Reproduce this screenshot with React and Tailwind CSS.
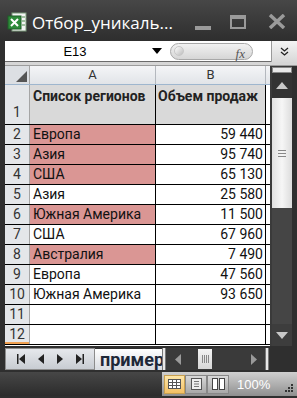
import React from "react";

const rows = [
  { n: 2, a: "Европа", b: "59 440", pink: true },
  { n: 3, a: "Азия", b: "95 740", pink: true },
  { n: 4, a: "США", b: "65 130", pink: true },
  { n: 5, a: "Азия", b: "25 580" },
  { n: 6, a: "Южная Америка", b: "11 500", pink: true },
  { n: 7, a: "США", b: "67 960" },
  { n: 8, a: "Австралия", b: "7 490", pink: true },
  { n: 9, a: "Европа", b: "47 560" },
  { n: 10, a: "Южная Америка", b: "93 650" },
  { n: 11, a: "", b: "" },
  { n: 12, a: "", b: "" },
];

function ExcelIcon() {
  return (
    <svg width="20" height="20" viewBox="0 0 20 20">
      <rect x="5" y="1" width="14" height="18" fill="#f4f4f4" stroke="#7a9a7a" />
      <rect x="1" y="4" width="13" height="13" fill="#2e8b3a" stroke="#1d5e26" />
      <path d="M4 7 L11 14 M11 7 L4 14" stroke="#fff" strokeWidth="2" />
      <path d="M15 5h3M15 9h3M15 13h3" stroke="#4a8a4a" strokeWidth="1" />
    </svg>
  );
}

export default function App() {
  const font = { fontFamily: 'Roboto, "Noto Sans", sans-serif' };
  return (
    <div className="w-[297px] h-[398px] bg-[#2f2f2f] overflow-hidden relative" style={font}>
      {/* Title bar */}
      <div className="h-[41px] flex items-center bg-gradient-to-b from-[#474747] to-[#2e2e2e] relative">
        <div className="ml-[7px] mt-[3px]"><ExcelIcon /></div>
        <div className="ml-[5px] mt-[3px] text-white text-[17px] leading-none" style={{ fontFamily: '"Open Sans", sans-serif' }}>Отбор_уникаль...</div>
        <div className="absolute left-[195px] top-[26px] w-[16px] h-[4px] bg-[#9a9a9a]" />
        <div className="absolute left-[230px] top-[15px] w-[16px] h-[14px] border-[2px] border-t-[4px] border-[#9a9a9a]" />
        <svg className="absolute left-[268px] top-[14px]" width="18" height="15" viewBox="0 0 18 15">
          <path d="M2 1 L16 14 M16 1 L2 14" stroke="#9a9a9a" strokeWidth="3.5" />
        </svg>
      </div>
      {/* Formula bar */}
      <div className="ml-[5px] w-[292px] h-[21px] bg-white flex items-center border-b border-[#6b6b6b]">
        <div className="w-[140px] text-center text-[13px] text-black leading-none" style={{ fontFamily: '"Liberation Sans", sans-serif' }}>E13</div>
        <svg width="10" height="6" viewBox="0 0 10 6" className="ml-[7px]"><path d="M0 0h10L5 6z" fill="#000" /></svg>
        <div className="ml-[8px] w-[83px] h-[17px] rounded-full border border-[#a8a8a8] bg-gradient-to-b from-[#f2f2f2] to-[#d6d6d6] flex items-center relative">
          <div className="ml-[3px] w-[10px] h-[10px] rounded-full bg-gradient-to-br from-[#ffffff] to-[#bcbcbc] border border-[#c8c8c8]" />
          <span className="absolute right-[7px] top-[0px] text-[13px] italic text-[#555]" style={{ fontFamily: '"Liberation Serif", serif' }}>fx</span>
        </div>
        <div className="ml-auto w-[26px] h-[21px] bg-gradient-to-b from-[#f4f4f4] to-[#d8d8d8] border-l border-[#9a9a9a] flex items-center justify-center">
          <svg width="9" height="9" viewBox="0 0 9 9"><path d="M1 1l3.5 3 3.5-3M1 5l3.5 3 3.5-3" stroke="#222" strokeWidth="1.3" fill="none" /></svg>
        </div>
      </div>
      <div className="ml-[5px] w-[292px] h-[4px] bg-[#d6d6d6] border-b border-[#9c9c9c]" />
      {/* Grid + vertical scrollbar */}
      <div className="ml-[5px] flex h-[280px]">
        <div className="w-[265px] bg-white flex flex-col">
          {/* column header */}
          <div className="flex h-[19px] border-b border-[#9eb6ce]">
            <div className="w-[25px] bg-[#dcdfe3] border-r border-[#a5a5a5] relative">
              <svg className="absolute right-[2px] bottom-[2px]" width="11" height="11" viewBox="0 0 11 11"><path d="M11 0V11H0z" fill="#555" /></svg>
            </div>
            <div className="w-[126px] bg-gradient-to-b from-[#f4f5f7] to-[#e1e4e8] border-r border-[#b4b8be] flex items-center justify-center text-[13px] text-[#333]">A</div>
            <div className="w-[110px] bg-gradient-to-b from-[#f4f5f7] to-[#e1e4e8] border-r border-[#b4b8be] flex items-center justify-center text-[13px] text-[#333]">B</div>
            <div className="flex-1 bg-gradient-to-b from-[#f4f5f7] to-[#e1e4e8]" />
          </div>
          {/* row 1 */}
          <div className="flex h-[40px] border-b border-black">
            <div className="w-[25px] bg-[#e4e6e9] border-r border-[#a5a5a5] flex items-end justify-center pb-[1px] text-[14px] text-[#333]">1</div>
            <div className="w-[126px] bg-[#d9d9d9] border-r border-black px-[3px] pt-[2px] text-[14px] font-bold text-[#222] leading-[19px] whitespace-nowrap overflow-hidden">Список регионов</div>
            <div className="w-[110px] bg-[#d9d9d9] border-r border-black px-[2px] pt-[2px] text-[14px] font-bold text-[#222] leading-[19px] whitespace-nowrap overflow-hidden">Объем продаж</div>
            <div className="flex-1 bg-white" />
          </div>
          {rows.map((r) => (
            <div key={r.n} className="flex h-[20px] border-b border-black">
              <div className={`w-[25px] bg-[#e4e6e9] border-r border-[#a5a5a5] flex items-center justify-center text-[14px] text-[#333] ${r.n === 12 ? "shadow-[inset_0_-2px_0_#f0a050]" : ""}`}>{r.n}</div>
              <div className={`w-[126px] border-r border-black px-[3px] flex items-center text-[14px] text-[#111] whitespace-nowrap ${r.pink ? "bg-[#da9694]" : "bg-white"}`}>{r.a}</div>
              <div className="w-[110px] border-r border-black px-[2px] flex items-center justify-end text-[14px] text-[#111]">{r.b}</div>
              <div className="flex-1 bg-white" />
            </div>
          ))}
        </div>
        {/* vertical scrollbar */}
        <div className="w-[22px] bg-[#3a3a3a] flex flex-col items-center pl-[1px]">
          <div className="w-[20px] h-[6px] mt-[1px] bg-[#e9e9e9] border border-[#888]" />
          <div className="w-[20px] h-[25px] bg-[#333] flex items-center justify-center">
            <svg width="12" height="7" viewBox="0 0 12 7"><path d="M6 0L12 7H0z" fill="#c8c8c8" /></svg>
          </div>
          <div className="w-[20px] h-[110px] bg-gradient-to-r from-[#e0e0e0] via-[#f6f6f6] to-[#dcdcdc] flex items-center justify-center">
            <svg width="8" height="7" viewBox="0 0 8 7"><path d="M0 0.5h8M0 3.5h8M0 6.5h8" stroke="#888" /></svg>
          </div>
          <div className="w-[20px] flex-1 bg-[#454545]" />
          <div className="w-[20px] h-[22px] bg-[#3d3d3d] flex items-center justify-center">
            <svg width="12" height="7" viewBox="0 0 12 7"><path d="M0 0H12L6 7z" fill="#c8c8c8" /></svg>
          </div>
        </div>
      </div>
      {/* Tab row */}
      <div className="ml-[5px] flex h-[22px] mt-[2px]">
        <div className="w-[90px] bg-gradient-to-b from-[#e6e8ec] to-[#c8ccd2] border border-[#8c8c8c] flex items-center justify-around px-[4px]">
          <svg width="8" height="10" viewBox="0 0 8 10"><path d="M0 0h1.5v10H0zM8 0v10L2 5z" fill="#222" /></svg>
          <svg width="6" height="10" viewBox="0 0 6 10"><path d="M6 0v10L0 5z" fill="#222" /></svg>
          <svg width="6" height="10" viewBox="0 0 6 10"><path d="M0 0v10L6 5z" fill="#222" /></svg>
          <svg width="8" height="10" viewBox="0 0 8 10"><path d="M0 0v10L6 5zM6.5 0H8v10H6.5z" fill="#222" /></svg>
        </div>
        <div className="w-[67px] bg-gradient-to-b from-[#ffffff] to-[#d8dbe0] overflow-hidden whitespace-nowrap pl-[5px] text-[18px] font-bold text-[#1e2838] leading-[21px] mt-[1px]">пример</div>
        <div className="w-[4px] bg-[#e8e8e8] border-x border-[#777]" />
        <div className="w-[99px] bg-[#3a3a3a] flex items-center relative">
          <svg className="ml-[9px]" width="6" height="11" viewBox="0 0 6 11"><path d="M6 0v11L0 5.5z" fill="#9a9a9a" /></svg>
          <div className="ml-[17px] w-[14px] h-[20px] bg-gradient-to-b from-[#f4f4f4] to-[#d6d6d6] flex items-center justify-center">
            <svg width="7" height="8" viewBox="0 0 7 8"><path d="M0.5 0v8M2.5 0v8M4.5 0v8M6.5 0v8" stroke="#888" /></svg>
          </div>
          <svg className="ml-auto mr-[8px]" width="6" height="11" viewBox="0 0 6 11"><path d="M0 0v11L6 5.5z" fill="#9a9a9a" /></svg>
        </div>
        <div className="w-[4px] bg-[#e8e8e8] border-x border-[#777]" />
      </div>
      {/* Status bar */}
      <div className="flex h-[24px] mt-[2px]">
        <div className="w-[162px] bg-gradient-to-b from-[#474747] to-[#2c2c2c]" />
        <div className="flex-1 bg-gradient-to-b from-[#cfcfcf] via-[#b0b0b0] to-[#8f8f8f] flex items-center pl-[2px]">
          <div className="w-[21px] h-[19px] bg-gradient-to-b from-[#fde6a8] to-[#f4c064] border border-[#c8a050] flex items-center justify-center">
            <svg width="13" height="10" viewBox="0 0 13 10"><rect x="0.5" y="0.5" width="12" height="9" fill="#fff" stroke="#555" /><path d="M0 3.5h13M0 6.5h13M4.5 0v10M8.5 0v10" stroke="#555" /></svg>
          </div>
          <div className="w-[22px] h-[19px] border border-[#888] bg-gradient-to-b from-[#d8d8d8] to-[#a8a8a8] flex items-center justify-center">
            <svg width="11" height="12" viewBox="0 0 11 12"><rect x="0.5" y="0.5" width="10" height="11" fill="#eee" stroke="#555" /><path d="M3 3.5h5M3 6h5M3 8.5h5" stroke="#777" /></svg>
          </div>
          <div className="w-[22px] h-[19px] border border-[#888] bg-gradient-to-b from-[#d8d8d8] to-[#a8a8a8] flex items-center justify-center">
            <svg width="13" height="12" viewBox="0 0 13 12"><rect x="0.5" y="0.5" width="5" height="11" fill="#fff" stroke="#444" /><rect x="7.5" y="0.5" width="5" height="11" fill="#fff" stroke="#444" /></svg>
          </div>
          <span className="ml-[8px] text-[13px] text-white leading-none" style={{ fontFamily: '"Liberation Sans", sans-serif' }}>100%</span>
          <svg className="ml-auto mr-[3px] mt-[8px]" width="11" height="11" viewBox="0 0 11 11">
            <path d="M8 1h2v2H8zM5 4h2v2H5zM8 4h2v2H8zM2 7h2v2H2zM5 7h2v2H5zM8 7h2v2H8z" fill="#333" />
          </svg>
        </div>
      </div>
    </div>
  );
}
